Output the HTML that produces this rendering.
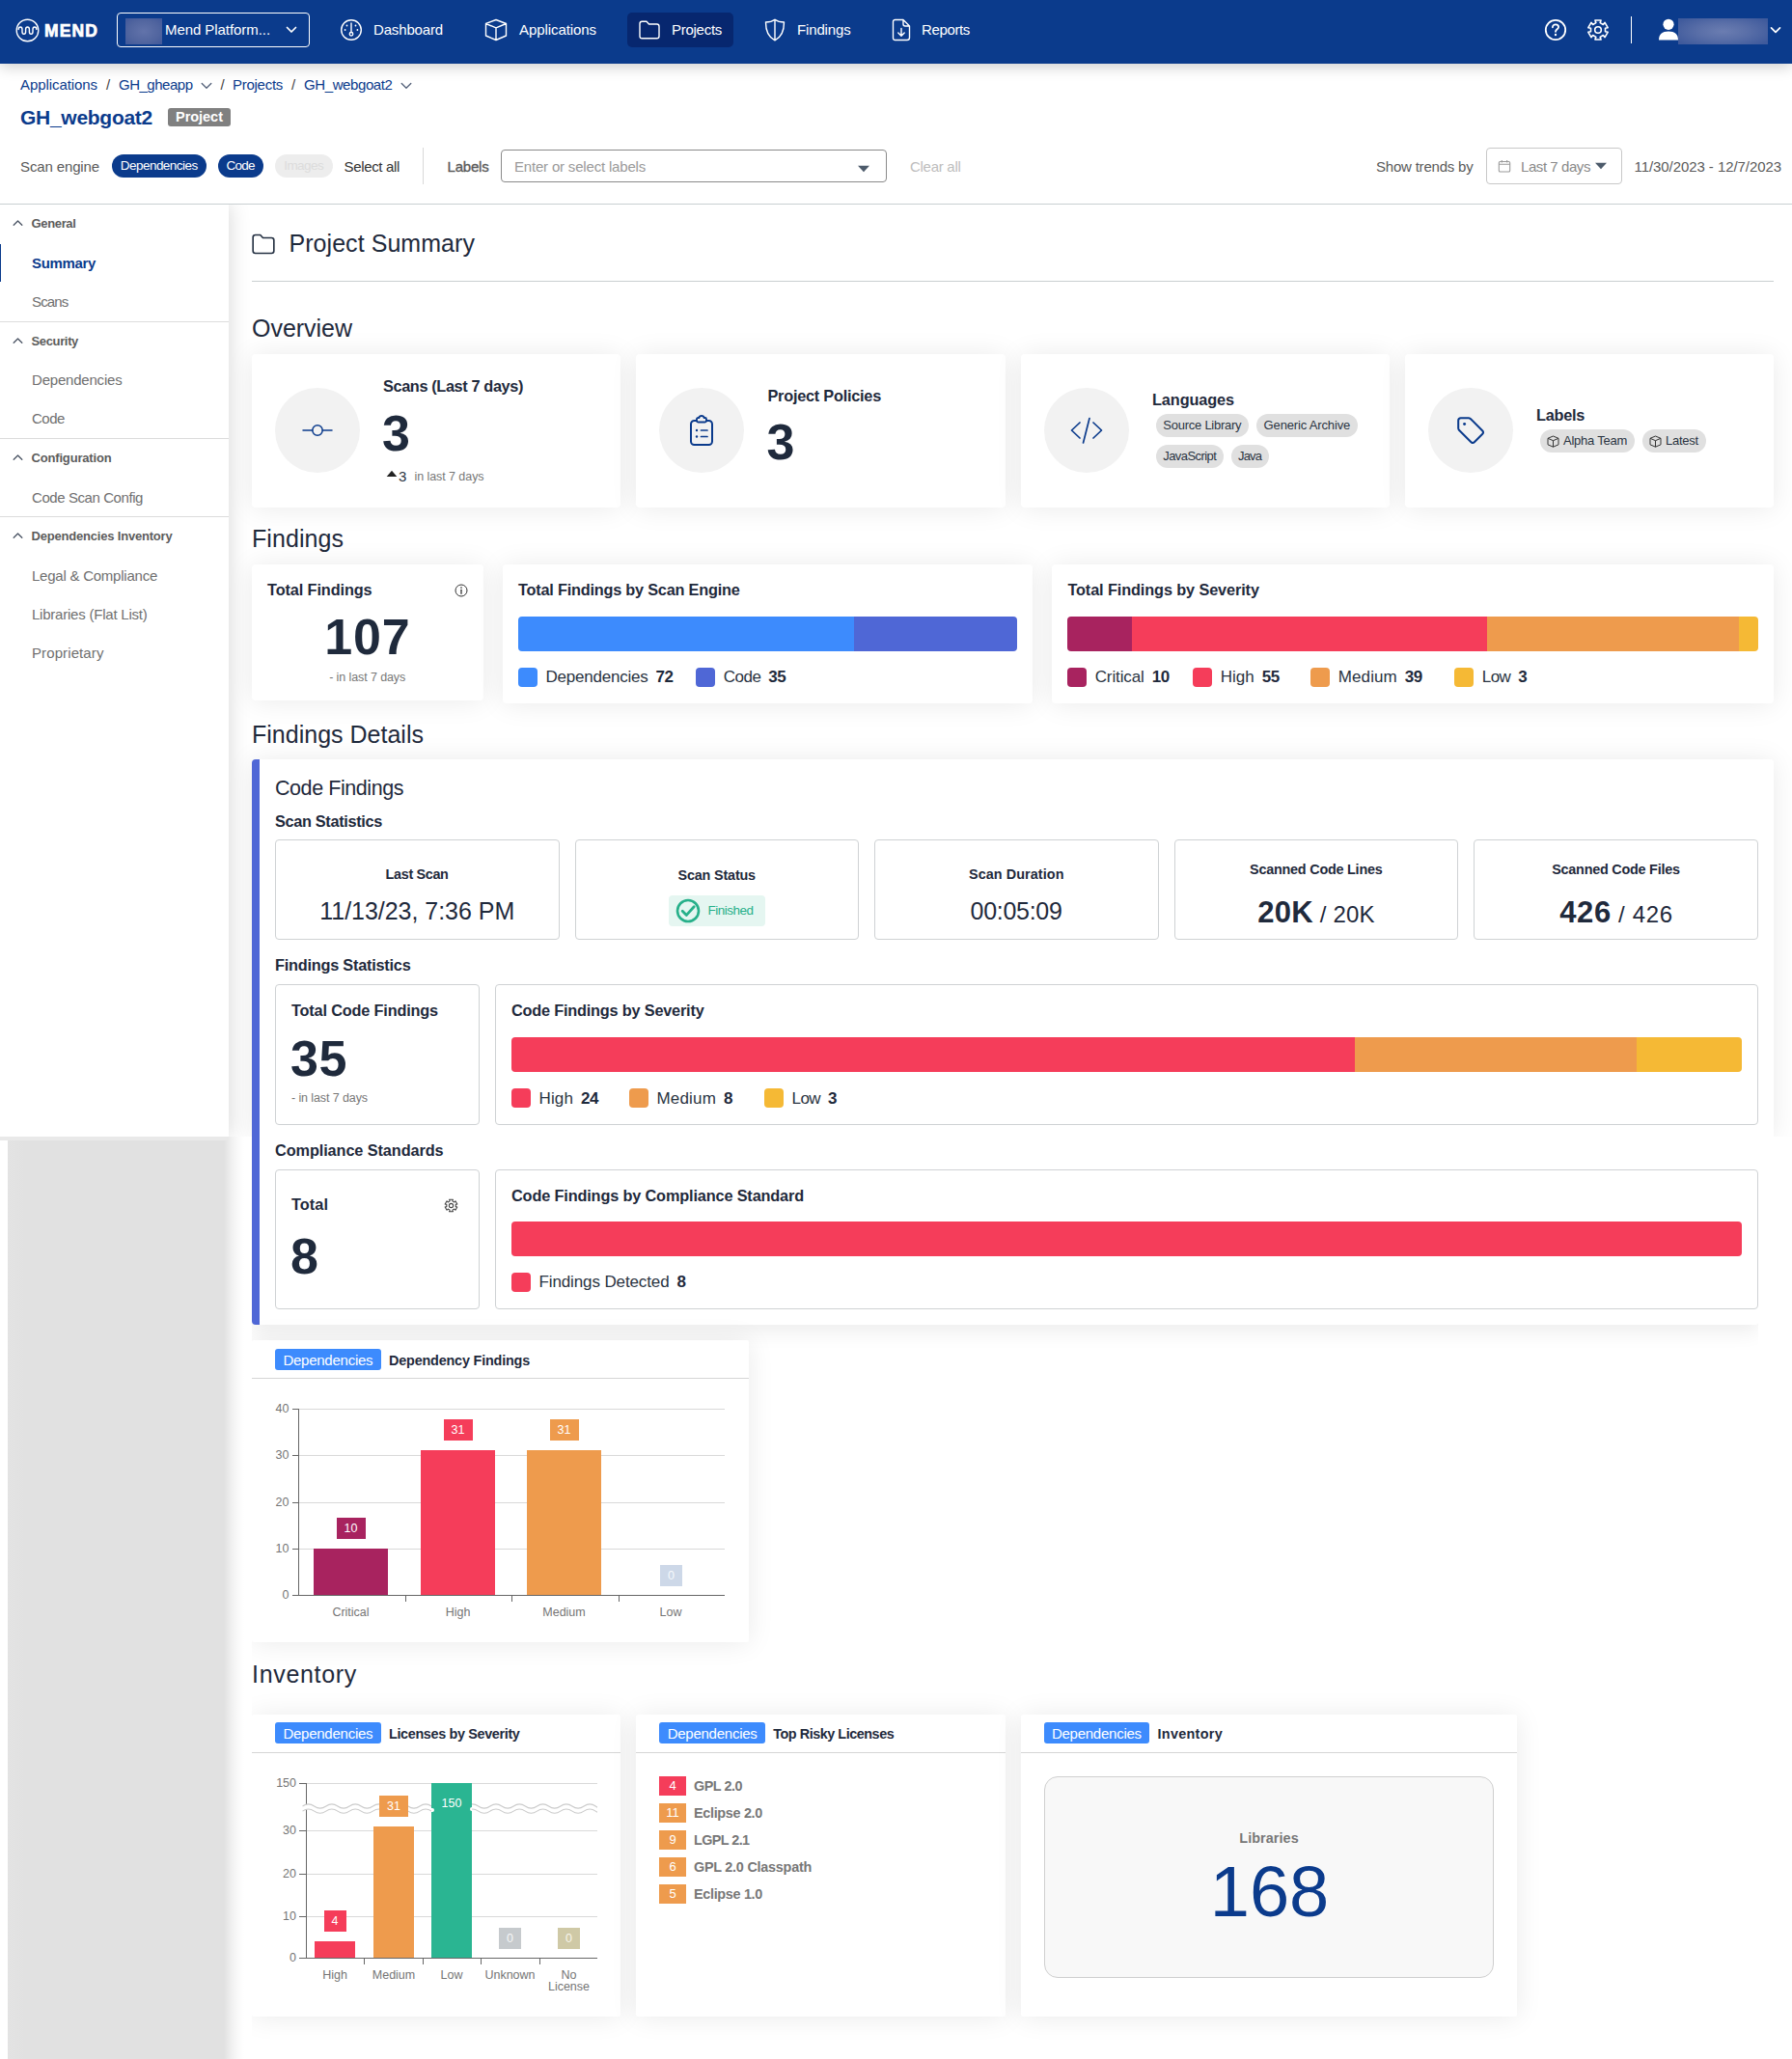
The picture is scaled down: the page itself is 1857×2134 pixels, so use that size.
<!DOCTYPE html>
<html><head><meta charset="utf-8"><title>Project Summary</title>
<style>
html,body{margin:0;padding:0;}
body{width:1857px;height:2134px;position:relative;overflow:hidden;background:#fff;font-family:"Liberation Sans",sans-serif;}
.a{position:absolute;}
.t{white-space:pre;line-height:1;}
b{font-weight:700;}
</style></head><body>
<div class="a" style="left:0px;top:212px;width:237.2px;height:966px;background:#fff;box-shadow:2px 0 20px rgba(0,0,0,0.14);clip-path:inset(0 -30px 0 0);"></div>
<div class="a" style="left:8px;top:1178px;width:252px;height:956px;background:linear-gradient(90deg,#e3e3e3 0,#e1e1e1 18px,#e1e1e1 224px,#f2f2f2 233px,#fbfbfb 240px,#fff 245px);"></div>
<div class="a" style="left:0px;top:1178px;width:237px;height:3.5px;background:#e9e9e9;"></div>
<div class="a" style="left:0px;top:0px;width:1857px;height:66px;background:#0b3b8c;box-shadow:0 3px 14px rgba(0,0,0,0.2);"></div>
<svg class="a" style="left:16px;top:19px;" width="25" height="25" viewBox="0 0 25 25"><circle cx="12.5" cy="12.5" r="11.3" fill="none" stroke="#fff" stroke-width="1.4"/><path d="M3.2 11.5 C3.2 8.2 7 8.2 7 11.5 V14 C7 17 10.6 17 10.6 14 V11.3 C10.6 8.2 14.4 8.2 14.4 11.3 V14 C14.4 17 18 17 18 14 V11.5 C18 8.2 21.8 8.2 21.8 11.5" fill="none" stroke="#fff" stroke-width="1.4" stroke-linecap="round"/></svg>
<div class="a t" style="left:46.00px;top:23.63px;font-size:17.5px;font-weight:700;color:#fff;letter-spacing:1.117px;-webkit-text-stroke:0.7px #fff;">MEND</div>
<div class="a" style="left:121px;top:13px;width:200px;height:36px;background:transparent;border-radius:4px;border:1.5px solid #fff;box-sizing:border-box;"></div>
<div class="a" style="left:130px;top:19px;width:38px;height:27px;background:radial-gradient(ellipse at center,#6273aa 0,#51659f 60%,#41589a 100%);"></div>
<div class="a t" style="left:171.00px;top:22.85px;font-size:15px;font-weight:400;color:#fff;letter-spacing:-0.065px;">Mend Platform...</div>
<svg class="a" style="left:296px;top:26px;" width="12" height="10" viewBox="0 0 12 10"><path d="M1.5 2.5 L6 7 L10.5 2.5" fill="none" stroke="#fff" stroke-width="1.7" stroke-linecap="round" stroke-linejoin="round"/></svg>
<svg class="a" style="left:352px;top:19px;" width="24" height="24" viewBox="0 0 24 24"><circle cx="12" cy="12" r="10.3" fill="none" stroke="#fff" stroke-width="1.4"/><path d="M12 5 V14.5" stroke="#fff" stroke-width="1.4" stroke-linecap="round"/><circle cx="12" cy="16.3" r="1.8" fill="none" stroke="#fff" stroke-width="1.3"/><circle cx="5.6" cy="12" r="0.9" fill="#fff"/><circle cx="18.4" cy="12" r="0.9" fill="#fff"/><circle cx="7.5" cy="7.5" r="0.9" fill="#fff"/><circle cx="16.5" cy="7.5" r="0.9" fill="#fff"/></svg>
<div class="a t" style="left:387.00px;top:22.85px;font-size:15px;font-weight:400;color:#fff;letter-spacing:-0.155px;">Dashboard</div>
<svg class="a" style="left:501px;top:18px;" width="26" height="26" viewBox="0 0 26 26"><path d="M13 2.5 L23.5 6.5 V19 L13 23.5 L2.5 19 V6.5 Z M2.5 6.5 L13 10.8 L23.5 6.5 M13 10.8 V23.5" fill="none" stroke="#fff" stroke-width="1.4" stroke-linejoin="round"/></svg>
<div class="a t" style="left:538.00px;top:22.85px;font-size:15px;font-weight:400;color:#fff;letter-spacing:-0.074px;">Applications</div>
<div class="a" style="left:650px;top:13px;width:110px;height:36px;background:#07276f;border-radius:5px;"></div>
<svg class="a" style="left:661px;top:19px;" width="24" height="24" viewBox="0 0 24 24"><path d="M2 5.5 C2 4.2 3 3.2 4.3 3.2 H9 L11.5 6 H19.7 C21 6 22 7 22 8.3 V18.5 C22 19.8 21 20.8 19.7 20.8 H4.3 C3 20.8 2 19.8 2 18.5 Z" fill="none" stroke="#fff" stroke-width="1.4" stroke-linejoin="round"/></svg>
<div class="a t" style="left:696.00px;top:22.85px;font-size:15px;font-weight:400;color:#fff;letter-spacing:-0.273px;">Projects</div>
<svg class="a" style="left:791px;top:18px;" width="24" height="26" viewBox="0 0 24 26"><path d="M12 2.2 C9 4.5 5.5 5 2.5 5 C2.5 14 5 20.5 12 23.8 C19 20.5 21.5 14 21.5 5 C18.5 5 15 4.5 12 2.2 Z M12 2.2 V23.8" fill="none" stroke="#fff" stroke-width="1.4" stroke-linejoin="round"/></svg>
<div class="a t" style="left:826.00px;top:22.85px;font-size:15px;font-weight:400;color:#fff;letter-spacing:-0.150px;">Findings</div>
<svg class="a" style="left:924px;top:19px;" width="20" height="24" viewBox="0 0 20 24"><path d="M3.5 1.5 H12 L18.5 8 V20 C18.5 21.4 17.4 22.5 16 22.5 H3.5 C2.4 22.5 1.5 21.6 1.5 20.5 V3.5 C1.5 2.4 2.4 1.5 3.5 1.5 Z M12 1.5 V6 C12 7.1 12.9 8 14 8 H18.5" fill="none" stroke="#fff" stroke-width="1.4" stroke-linejoin="round"/><path d="M10 10.5 V18 M6.8 15 L10 18.2 L13.2 15" fill="none" stroke="#fff" stroke-width="1.4" stroke-linecap="round" stroke-linejoin="round"/></svg>
<div class="a t" style="left:955.00px;top:22.85px;font-size:15px;font-weight:400;color:#fff;letter-spacing:-0.362px;">Reports</div>
<svg class="a" style="left:1600px;top:19px;" width="24" height="24" viewBox="0 0 24 24"><circle cx="12" cy="12" r="10.2" fill="none" stroke="#fff" stroke-width="1.8"/><path d="M8.9 9.3 C8.9 7.4 10.3 6.4 12 6.4 C13.8 6.4 15.1 7.5 15.1 9.1 C15.1 11.3 12 11.4 12 13.8" fill="none" stroke="#fff" stroke-width="1.8" stroke-linecap="round"/><circle cx="12" cy="17" r="1.2" fill="#fff"/></svg>
<svg class="a" style="left:1644px;top:19px;" width="24" height="24" viewBox="0 0 24 24"><path d="M8.93 2.06 L15.07 2.06 L14.15 4.61 L17.32 6.44 L19.07 4.37 L22.14 9.69 L19.48 10.17 L19.48 13.83 L22.14 14.31 L19.07 19.63 L17.32 17.56 L14.15 19.39 L15.07 21.94 L8.93 21.94 L9.85 19.39 L6.68 17.56 L4.93 19.63 L1.86 14.31 L4.52 13.83 L4.52 10.17 L1.86 9.69 L4.93 4.37 L6.68 6.44 L9.85 4.61 Z" fill="none" stroke="#fff" stroke-width="1.6" stroke-linejoin="round"/><circle cx="12" cy="12" r="3.3" fill="none" stroke="#fff" stroke-width="1.6"/></svg>
<div class="a" style="left:1689.5px;top:17px;width:1.7000000000000455px;height:28px;background:#fff;"></div>
<svg class="a" style="left:1718px;top:19px;" width="22" height="23" viewBox="0 0 22 23"><circle cx="11" cy="6.3" r="5.6" fill="#fff"/><path d="M1 22.5 C1 16.5 4.5 13.5 11 13.5 C17.5 13.5 21 16.5 21 22.5 Z" fill="#fff"/></svg>
<div class="a" style="left:1739px;top:19px;width:93px;height:27px;background:radial-gradient(ellipse 60% 70% at center,#6b7db1 0,#5a6fa8 45%,#3f5a9c 100%);"></div>
<svg class="a" style="left:1834px;top:27px;" width="12" height="9" viewBox="0 0 12 9"><path d="M1.5 1.8 L6 6.3 L10.5 1.8" fill="none" stroke="#fff" stroke-width="1.7" stroke-linecap="round" stroke-linejoin="round"/></svg>
<div class="a t" style="left:21.00px;top:79.85px;font-size:15px;font-weight:400;color:#0b3b8c;letter-spacing:-0.074px;">Applications</div>
<div class="a t" style="left:110.00px;top:79.85px;font-size:15px;font-weight:400;color:#444;">/</div>
<div class="a t" style="left:123.00px;top:79.85px;font-size:15px;font-weight:400;color:#0b3b8c;letter-spacing:-0.490px;">GH_gheapp</div>
<svg class="a" style="left:208px;top:84.5px;" width="12" height="8" viewBox="0 0 12 8"><path d="M1.2 1.5 L6 6.3 L10.8 1.5" fill="none" stroke="#55627a" stroke-width="1.3" stroke-linecap="round" stroke-linejoin="round"/></svg>
<div class="a t" style="left:228.50px;top:79.85px;font-size:15px;font-weight:400;color:#444;">/</div>
<div class="a t" style="left:241.00px;top:79.85px;font-size:15px;font-weight:400;color:#0b3b8c;letter-spacing:-0.273px;">Projects</div>
<div class="a t" style="left:302.00px;top:79.85px;font-size:15px;font-weight:400;color:#444;">/</div>
<div class="a t" style="left:315.00px;top:79.85px;font-size:15px;font-weight:400;color:#0b3b8c;letter-spacing:-0.401px;">GH_webgoat2</div>
<svg class="a" style="left:415px;top:84.5px;" width="12" height="8" viewBox="0 0 12 8"><path d="M1.2 1.5 L6 6.3 L10.8 1.5" fill="none" stroke="#55627a" stroke-width="1.3" stroke-linecap="round" stroke-linejoin="round"/></svg>
<div class="a t" style="left:21.00px;top:110.71px;font-size:21px;font-weight:700;color:#0b3b8c;letter-spacing:-0.276px;">GH_webgoat2</div>
<div class="a" style="left:174px;top:112px;width:65px;height:19px;background:#808080;border-radius:3px;"></div>
<div class="a t" style="left:181.99px;top:114.39px;font-size:14.5px;font-weight:700;color:#fff;letter-spacing:-0.025px;">Project</div>
<div class="a t" style="left:21.00px;top:165.15px;font-size:15px;font-weight:400;color:#5a5a5a;letter-spacing:-0.128px;">Scan engine</div>
<div class="a" style="left:116px;top:160px;width:98px;height:24px;background:#0b3b8c;border-radius:12px;"></div>
<div class="a t" style="left:124.74px;top:164.88px;font-size:13.5px;font-weight:400;color:#fff;letter-spacing:-0.527px;">Dependencies</div>
<div class="a" style="left:226px;top:160px;width:47px;height:24px;background:#0b3b8c;border-radius:12px;"></div>
<div class="a t" style="left:234.59px;top:164.88px;font-size:13.5px;font-weight:400;color:#fff;letter-spacing:-0.820px;">Code</div>
<div class="a" style="left:285px;top:160px;width:60px;height:24px;background:#ededed;border-radius:12px;"></div>
<div class="a t" style="left:294.23px;top:164.88px;font-size:13.5px;font-weight:400;color:#dcdcdc;letter-spacing:-0.547px;">Images</div>
<div class="a t" style="left:356.50px;top:165.15px;font-size:15px;font-weight:400;color:#333;letter-spacing:-0.338px;">Select all</div>
<div class="a" style="left:438px;top:153px;width:1px;height:38px;background:#d9d9d9;"></div>
<div class="a t" style="left:463.50px;top:165.15px;font-size:15px;font-weight:400;color:#5a5a5a;letter-spacing:-0.201px;-webkit-text-stroke:0.35px #5a5a5a;">Labels</div>
<div class="a" style="left:519px;top:155px;width:400px;height:34px;background:#fff;border-radius:4px;border:1px solid #8a8a8a;box-sizing:border-box;"></div>
<div class="a t" style="left:533.00px;top:165.15px;font-size:15px;font-weight:400;color:#9a9a9a;letter-spacing:-0.185px;">Enter or select labels</div>
<svg class="a" style="left:888px;top:171px;" width="14" height="8" viewBox="0 0 14 8"><path d="M1 0.8 H13 L7 7.2 Z" fill="#4d5b6b"/></svg>
<div class="a t" style="left:943.00px;top:165.15px;font-size:15px;font-weight:400;color:#bdbdbd;letter-spacing:-0.281px;">Clear all</div>
<div class="a t" style="left:1426.00px;top:165.15px;font-size:15px;font-weight:400;color:#5a5a5a;letter-spacing:-0.206px;">Show trends by</div>
<div class="a" style="left:1539.5px;top:153px;width:141.0px;height:37.5px;background:#fff;border-radius:4px;border:1px solid #c8c8c8;box-sizing:border-box;"></div>
<svg class="a" style="left:1551.5px;top:165px;" width="14" height="14" viewBox="0 0 14 14"><rect x="1.3" y="2.5" width="11.4" height="10.5" rx="1.3" fill="none" stroke="#9a9a9a" stroke-width="1.1"/><path d="M1.3 5.3 H12.7 M4.3 1 V3.5 M9.7 1 V3.5" stroke="#9a9a9a" stroke-width="1.1"/></svg>
<div class="a t" style="left:1576.00px;top:164.65px;font-size:15px;font-weight:400;color:#8a8a8a;letter-spacing:-0.429px;">Last 7 days</div>
<svg class="a" style="left:1652px;top:168px;" width="14" height="8" viewBox="0 0 14 8"><path d="M1 0.8 H13 L7 7.2 Z" fill="#4d5b6b"/></svg>
<div class="a t" style="left:1693.50px;top:165.15px;font-size:15px;font-weight:400;color:#5a5a5a;letter-spacing:-0.070px;">11/30/2023 - 12/7/2023</div>
<div class="a" style="left:0px;top:210.9px;width:1857px;height:1.0999999999999943px;background:#c9cfd1;"></div>
<svg class="a" style="left:13.0px;top:227.0px;" width="11" height="8" viewBox="0 0 11 8"><path d="M1.2 6.3 L5.5 2 L9.8 6.3" fill="none" stroke="#4a5464" stroke-width="1.3" stroke-linecap="round" stroke-linejoin="round"/></svg>
<div class="a t" style="left:32.50px;top:225.13px;font-size:13px;font-weight:700;color:#5c5c5c;letter-spacing:-0.346px;">General</div>
<div class="a" style="left:0px;top:253px;width:1.3px;height:39px;background:#0b3b8c;"></div>
<div class="a t" style="left:33.00px;top:265.15px;font-size:15px;font-weight:700;color:#0b3b8c;letter-spacing:-0.339px;">Summary</div>
<div class="a t" style="left:33.00px;top:305.15px;font-size:15px;font-weight:400;color:#707070;letter-spacing:-0.841px;">Scans</div>
<div class="a" style="left:0px;top:333px;width:237px;height:1px;background:#dcdcdc;"></div>
<svg class="a" style="left:13.0px;top:349.0px;" width="11" height="8" viewBox="0 0 11 8"><path d="M1.2 6.3 L5.5 2 L9.8 6.3" fill="none" stroke="#4a5464" stroke-width="1.3" stroke-linecap="round" stroke-linejoin="round"/></svg>
<div class="a t" style="left:32.50px;top:347.13px;font-size:13px;font-weight:700;color:#5c5c5c;letter-spacing:-0.352px;">Security</div>
<div class="a t" style="left:33.00px;top:386.15px;font-size:15px;font-weight:400;color:#707070;letter-spacing:-0.201px;">Dependencies</div>
<div class="a t" style="left:33.00px;top:426.15px;font-size:15px;font-weight:400;color:#707070;letter-spacing:-0.465px;">Code</div>
<div class="a" style="left:0px;top:454px;width:237px;height:1px;background:#dcdcdc;"></div>
<svg class="a" style="left:13.0px;top:470.0px;" width="11" height="8" viewBox="0 0 11 8"><path d="M1.2 6.3 L5.5 2 L9.8 6.3" fill="none" stroke="#4a5464" stroke-width="1.3" stroke-linecap="round" stroke-linejoin="round"/></svg>
<div class="a t" style="left:32.50px;top:468.13px;font-size:13px;font-weight:700;color:#5c5c5c;letter-spacing:-0.171px;">Configuration</div>
<div class="a t" style="left:33.00px;top:508.15px;font-size:15px;font-weight:400;color:#707070;letter-spacing:-0.422px;">Code Scan Config</div>
<div class="a" style="left:0px;top:535px;width:237px;height:1px;background:#dcdcdc;"></div>
<svg class="a" style="left:13.0px;top:551.0px;" width="11" height="8" viewBox="0 0 11 8"><path d="M1.2 6.3 L5.5 2 L9.8 6.3" fill="none" stroke="#4a5464" stroke-width="1.3" stroke-linecap="round" stroke-linejoin="round"/></svg>
<div class="a t" style="left:32.50px;top:549.13px;font-size:13px;font-weight:700;color:#5c5c5c;letter-spacing:-0.195px;">Dependencies Inventory</div>
<div class="a t" style="left:33.00px;top:589.15px;font-size:15px;font-weight:400;color:#707070;letter-spacing:-0.236px;">Legal & Compliance</div>
<div class="a t" style="left:33.00px;top:629.15px;font-size:15px;font-weight:400;color:#707070;letter-spacing:-0.224px;">Libraries (Flat List)</div>
<div class="a t" style="left:33.00px;top:669.15px;font-size:15px;font-weight:400;color:#707070;letter-spacing:0.104px;">Proprietary</div>
<svg class="a" style="left:260px;top:239.5px;" width="26" height="26" viewBox="0 0 24 24"><path d="M2 5.5 C2 4.2 3 3.2 4.3 3.2 H9 L11.5 6 H19.7 C21 6 22 7 22 8.3 V18.5 C22 19.8 21 20.8 19.7 20.8 H4.3 C3 20.8 2 19.8 2 18.5 Z" fill="none" stroke="#243042" stroke-width="1.5" stroke-linejoin="round"/></svg>
<div class="a t" style="left:299.50px;top:240.05px;font-size:25px;font-weight:400;color:#1f2a3c;letter-spacing:0.052px;">Project Summary</div>
<div class="a" style="left:261px;top:291px;width:1577px;height:1.1000000000000227px;background:#c9cfd1;"></div>
<div class="a t" style="left:261.00px;top:328.25px;font-size:25px;font-weight:400;color:#1f2a3c;letter-spacing:-0.023px;">Overview</div>
<div class="a" style="left:261px;top:367px;width:382.25px;height:159px;background:#fff;border-radius:4px;box-shadow:0 1px 28px rgba(0,0,0,0.085);"></div>
<div class="a" style="left:285px;top:402px;width:88px;height:88px;background:#f2f2f2;border-radius:44px;"></div>
<div class="a" style="left:659.25px;top:367px;width:382.25px;height:159px;background:#fff;border-radius:4px;box-shadow:0 1px 28px rgba(0,0,0,0.085);"></div>
<div class="a" style="left:683.25px;top:402px;width:88.0px;height:88px;background:#f2f2f2;border-radius:44px;"></div>
<div class="a" style="left:1057.5px;top:367px;width:382.25px;height:159px;background:#fff;border-radius:4px;box-shadow:0 1px 28px rgba(0,0,0,0.085);"></div>
<div class="a" style="left:1081.5px;top:402px;width:88.0px;height:88px;background:#f2f2f2;border-radius:44px;"></div>
<div class="a" style="left:1455.75px;top:367px;width:382.25px;height:159px;background:#fff;border-radius:4px;box-shadow:0 1px 28px rgba(0,0,0,0.085);"></div>
<div class="a" style="left:1479.75px;top:402px;width:88.0px;height:88px;background:#f2f2f2;border-radius:44px;"></div>
<svg class="a" style="left:313px;top:436px;" width="32" height="20" viewBox="0 0 32 20"><circle cx="16" cy="10" r="5.2" fill="none" stroke="#0b3b8c" stroke-width="1.5"/><path d="M1 10 H10.8 M21.2 10 H31" stroke="#0b3b8c" stroke-width="1.5" stroke-linecap="round"/></svg>
<div class="a t" style="left:397.00px;top:392.41px;font-size:16.3px;font-weight:700;color:#1f2a3c;letter-spacing:-0.370px;">Scans (Last 7 days)</div>
<div class="a t" style="left:396.00px;top:422.92px;font-size:52px;font-weight:700;color:#1f2a3c;">3</div>
<svg class="a" style="left:400px;top:487px;" width="12" height="8" viewBox="0 0 12 8"><path d="M6 0.8 L11.3 7 H0.7 Z" fill="#222"/></svg>
<div class="a t" style="left:413.00px;top:486.15px;font-size:15px;font-weight:400;color:#2a3442;">3</div>
<div class="a t" style="left:429.50px;top:487.68px;font-size:12.5px;font-weight:400;color:#777;letter-spacing:-0.069px;">in last 7 days</div>
<svg class="a" style="left:712.8px;top:430px;" width="28" height="34" viewBox="0 0 28 34"><rect x="3" y="6" width="22" height="25" rx="3.5" fill="none" stroke="#0b3b8c" stroke-width="2"/><path d="M9 6 V4.5 C9 3.7 9.7 3 10.5 3 H11.3 C11.6 1.8 12.7 1 14 1 C15.3 1 16.4 1.8 16.7 3 H17.5 C18.3 3 19 3.7 19 4.5 V6 C19 6.8 18.3 7.5 17.5 7.5 H10.5 C9.7 7.5 9 6.8 9 6 Z" fill="#f2f2f2" stroke="#0b3b8c" stroke-width="1.9"/><path d="M13.5 16 H20 M13.5 22.5 H20" stroke="#0b3b8c" stroke-width="1.7" stroke-linecap="round"/><circle cx="9" cy="16" r="1.2" fill="#0b3b8c"/><circle cx="9" cy="22.5" r="1.2" fill="#0b3b8c"/></svg>
<div class="a t" style="left:795.50px;top:402.01px;font-size:16.3px;font-weight:700;color:#1f2a3c;letter-spacing:-0.235px;">Project Policies</div>
<div class="a t" style="left:794.50px;top:431.92px;font-size:52px;font-weight:700;color:#1f2a3c;">3</div>
<svg class="a" style="left:1108px;top:430px;" width="36" height="32" viewBox="0 0 36 32"><path d="M11 8 L2.5 16 L11 24 M25 8 L33.5 16 L25 24 M21 3.5 L14.5 29" fill="none" stroke="#0b3b8c" stroke-width="1.7" stroke-linecap="round" stroke-linejoin="round"/></svg>
<div class="a t" style="left:1194.00px;top:406.01px;font-size:16.3px;font-weight:700;color:#1f2a3c;letter-spacing:-0.106px;">Languages</div>
<div class="a" style="left:1198px;top:429px;width:96px;height:24px;background:#e0e0e0;border-radius:12.0px;"></div>
<div class="a t" style="left:1205.37px;top:434.33px;font-size:13px;font-weight:400;color:#2a3442;letter-spacing:-0.253px;">Source Library</div>
<div class="a" style="left:1302.2px;top:429px;width:104.5px;height:24px;background:#e0e0e0;border-radius:12.0px;"></div>
<div class="a t" style="left:1309.62px;top:434.33px;font-size:13px;font-weight:400;color:#2a3442;letter-spacing:-0.151px;">Generic Archive</div>
<div class="a" style="left:1198px;top:461px;width:70px;height:24px;background:#e0e0e0;border-radius:12.0px;"></div>
<div class="a t" style="left:1205.21px;top:466.33px;font-size:13px;font-weight:400;color:#2a3442;letter-spacing:-0.570px;">JavaScript</div>
<div class="a" style="left:1276px;top:461px;width:39px;height:24px;background:#e0e0e0;border-radius:12.0px;"></div>
<div class="a t" style="left:1283.07px;top:466.33px;font-size:13px;font-weight:400;color:#2a3442;letter-spacing:-0.867px;">Java</div>
<svg class="a" style="left:1507.8px;top:430px;" width="32" height="32" viewBox="0 0 30 30"><path d="M3 5.5 C3 4.1 4.1 3 5.5 3 H13 C13.7 3 14.3 3.3 14.8 3.7 L26.3 15.2 C27.3 16.2 27.3 17.8 26.3 18.8 L18.8 26.3 C17.8 27.3 16.2 27.3 15.2 26.3 L3.7 14.8 C3.3 14.3 3 13.7 3 13 Z" fill="none" stroke="#0b3b8c" stroke-width="1.9" stroke-linejoin="round"/><circle cx="9" cy="9" r="1.4" fill="#0b3b8c"/></svg>
<div class="a t" style="left:1592.00px;top:422.01px;font-size:16.3px;font-weight:700;color:#1f2a3c;letter-spacing:-0.266px;">Labels</div>
<div class="a" style="left:1596px;top:445px;width:98px;height:24px;background:#e0e0e0;border-radius:12.0px;"></div>
<svg class="a" style="left:1603px;top:450.5px;" width="13" height="13" viewBox="0 0 13 13"><path d="M6.5 1 L12 3.3 V9.8 L6.5 12.2 L1 9.8 V3.3 Z M1 3.3 L6.5 5.7 L12 3.3 M6.5 5.7 V12.2" fill="none" stroke="#333" stroke-width="1" stroke-linejoin="round"/></svg>
<div class="a t" style="left:1620.00px;top:450.33px;font-size:13px;font-weight:400;color:#2a3442;letter-spacing:-0.242px;">Alpha Team</div>
<div class="a" style="left:1702px;top:445px;width:66px;height:24px;background:#e0e0e0;border-radius:12.0px;"></div>
<svg class="a" style="left:1709px;top:450.5px;" width="13" height="13" viewBox="0 0 13 13"><path d="M6.5 1 L12 3.3 V9.8 L6.5 12.2 L1 9.8 V3.3 Z M1 3.3 L6.5 5.7 L12 3.3 M6.5 5.7 V12.2" fill="none" stroke="#333" stroke-width="1" stroke-linejoin="round"/></svg>
<div class="a t" style="left:1726.00px;top:450.33px;font-size:13px;font-weight:400;color:#2a3442;letter-spacing:-0.237px;">Latest</div>
<div class="a t" style="left:261.00px;top:546.25px;font-size:25px;font-weight:400;color:#1f2a3c;letter-spacing:0.062px;">Findings</div>
<div class="a" style="left:261px;top:585px;width:239.8px;height:141px;background:#fff;border-radius:4px;box-shadow:0 1px 28px rgba(0,0,0,0.085);"></div>
<div class="a" style="left:521px;top:585px;width:548.7px;height:144px;background:#fff;border-radius:4px;box-shadow:0 1px 28px rgba(0,0,0,0.085);"></div>
<div class="a" style="left:1090.4px;top:585px;width:747.5999999999999px;height:144px;background:#fff;border-radius:4px;box-shadow:0 1px 28px rgba(0,0,0,0.085);"></div>
<div class="a t" style="left:277.00px;top:602.81px;font-size:16.3px;font-weight:700;color:#1f2a3c;letter-spacing:-0.110px;">Total Findings</div>
<svg class="a" style="left:471px;top:604.8px;" width="14" height="14" viewBox="0 0 14 14"><circle cx="7" cy="7" r="6" fill="none" stroke="#333" stroke-width="1"/><path d="M7 6.3 V10.3" stroke="#333" stroke-width="1.3" stroke-linecap="round"/><circle cx="7" cy="4" r="0.85" fill="#333"/></svg>
<div class="a t" style="left:336.37px;top:634.02px;font-size:52px;font-weight:700;color:#1f2a3c;letter-spacing:0.745px;">107</div>
<div class="a t" style="left:341.15px;top:695.88px;font-size:12.5px;font-weight:400;color:#777;letter-spacing:-0.100px;">- in last 7 days</div>
<div class="a t" style="left:537.00px;top:602.61px;font-size:16.3px;font-weight:700;color:#1f2a3c;letter-spacing:-0.217px;">Total Findings by Scan Engine</div>
<div class="a" style="left:537px;top:639px;width:347.79999999999995px;height:36px;background:#3d8bfd;border-radius:4px 0px 0px 4px;"></div>
<div class="a" style="left:884.8px;top:639px;width:168.79999999999995px;height:36px;background:#4f67d6;border-radius:0px 4px 4px 0px;"></div>
<div class="a" style="left:537px;top:692px;width:20px;height:20px;background:#3d8bfd;border-radius:4px;"></div>
<div class="a t" style="left:565.50px;top:692.97px;font-size:17px;font-weight:400;color:#2a3442;letter-spacing:-0.225px;">Dependencies</div>
<div class="a t" style="left:679.50px;top:692.97px;font-size:17px;font-weight:700;color:#1f2a3c;letter-spacing:-0.461px;">72</div>
<div class="a" style="left:721.3px;top:692px;width:20.0px;height:20px;background:#4f67d6;border-radius:4px;"></div>
<div class="a t" style="left:749.80px;top:692.97px;font-size:17px;font-weight:400;color:#2a3442;letter-spacing:-0.535px;">Code</div>
<div class="a t" style="left:796.30px;top:692.97px;font-size:17px;font-weight:700;color:#1f2a3c;letter-spacing:-0.461px;">35</div>
<div class="a t" style="left:1106.40px;top:602.61px;font-size:16.3px;font-weight:700;color:#1f2a3c;letter-spacing:-0.114px;">Total Findings by Severity</div>
<div class="a" style="left:1106px;top:639px;width:66.90000000000009px;height:36px;background:#a8235f;border-radius:4px 0px 0px 4px;"></div>
<div class="a" style="left:1172.9px;top:639px;width:368.0999999999999px;height:36px;background:#f53d5a;border-radius:0px 0px 0px 0px;"></div>
<div class="a" style="left:1541px;top:639px;width:261.20000000000005px;height:36px;background:#ee9b4d;border-radius:0px 0px 0px 0px;"></div>
<div class="a" style="left:1802.2px;top:639px;width:19.59999999999991px;height:36px;background:#f5b935;border-radius:0px 4px 4px 0px;"></div>
<div class="a" style="left:1106.2px;top:692px;width:20.0px;height:20px;background:#a8235f;border-radius:4px;"></div>
<div class="a t" style="left:1134.70px;top:692.97px;font-size:17px;font-weight:400;color:#2a3442;letter-spacing:-0.119px;">Critical</div>
<div class="a t" style="left:1193.70px;top:692.97px;font-size:17px;font-weight:700;color:#1f2a3c;letter-spacing:-0.461px;">10</div>
<div class="a" style="left:1236.2px;top:692px;width:20.0px;height:20px;background:#f53d5a;border-radius:4px;"></div>
<div class="a t" style="left:1264.70px;top:692.97px;font-size:17px;font-weight:400;color:#2a3442;letter-spacing:0.008px;">High</div>
<div class="a t" style="left:1307.70px;top:692.97px;font-size:17px;font-weight:700;color:#1f2a3c;letter-spacing:-0.461px;">55</div>
<div class="a" style="left:1358.3px;top:692px;width:20.0px;height:20px;background:#ee9b4d;border-radius:4px;"></div>
<div class="a t" style="left:1386.80px;top:692.97px;font-size:17px;font-weight:400;color:#2a3442;letter-spacing:0.089px;">Medium</div>
<div class="a t" style="left:1455.80px;top:692.97px;font-size:17px;font-weight:700;color:#1f2a3c;letter-spacing:-0.461px;">39</div>
<div class="a" style="left:1507.3px;top:692px;width:20.0px;height:20px;background:#f5b935;border-radius:4px;"></div>
<div class="a t" style="left:1535.80px;top:692.97px;font-size:17px;font-weight:400;color:#2a3442;letter-spacing:-0.562px;">Low</div>
<div class="a t" style="left:1573.30px;top:692.97px;font-size:17px;font-weight:700;color:#1f2a3c;letter-spacing:-0.469px;">3</div>
<div class="a t" style="left:261.00px;top:749.25px;font-size:25px;font-weight:400;color:#1f2a3c;letter-spacing:0.009px;">Findings Details</div>
<div class="a" style="left:261px;top:787px;width:1577px;height:391px;background:#fff;box-shadow:0 1px 28px rgba(0,0,0,0.085);border-radius:4px 3px 0 0;clip-path:inset(-40px -40px 0 -40px);"></div>
<div class="a" style="left:261px;top:1178px;width:1561px;height:195px;background:#fff;box-shadow:0 8px 20px rgba(0,0,0,0.07);border-radius:0 0 3px 4px;clip-path:inset(0 0 -40px 0);"></div>
<div class="a" style="left:261px;top:787px;width:8px;height:586px;background:#4f67d6;border-radius:4px 0 0 4px;"></div>
<div class="a t" style="left:285.00px;top:807.47px;font-size:21.5px;font-weight:400;color:#1f2a3c;letter-spacing:-0.434px;">Code Findings</div>
<div class="a t" style="left:285.00px;top:843.01px;font-size:16.3px;font-weight:700;color:#1f2a3c;letter-spacing:-0.323px;">Scan Statistics</div>
<div class="a" style="left:285px;top:870px;width:294.5px;height:103.60000000000002px;background:#fff;border-radius:4px;border:1px solid #cfd2d4;box-sizing:border-box;"></div>
<div class="a" style="left:595.8px;top:870px;width:294.0px;height:103.60000000000002px;background:#fff;border-radius:4px;border:1px solid #cfd2d4;box-sizing:border-box;"></div>
<div class="a" style="left:906px;top:870px;width:294.5px;height:103.60000000000002px;background:#fff;border-radius:4px;border:1px solid #cfd2d4;box-sizing:border-box;"></div>
<div class="a" style="left:1216.8px;top:870px;width:294.20000000000005px;height:103.60000000000002px;background:#fff;border-radius:4px;border:1px solid #cfd2d4;box-sizing:border-box;"></div>
<div class="a" style="left:1527.2px;top:870px;width:294.79999999999995px;height:103.60000000000002px;background:#fff;border-radius:4px;border:1px solid #cfd2d4;box-sizing:border-box;"></div>
<div class="a t" style="left:399.58px;top:899.24px;font-size:14.4px;font-weight:700;color:#1f2a3c;letter-spacing:-0.332px;">Last Scan</div>
<div class="a t" style="left:331.24px;top:932.25px;font-size:25px;font-weight:400;color:#1f2a3c;letter-spacing:-0.028px;">11/13/23, 7:36 PM</div>
<div class="a t" style="left:702.46px;top:900.14px;font-size:14.4px;font-weight:700;color:#1f2a3c;letter-spacing:-0.170px;">Scan Status</div>
<div class="a" style="left:693px;top:928px;width:99.5px;height:32px;background:#e5f6f1;border-radius:4px;"></div>
<svg class="a" style="left:699.5px;top:930.5px;" width="26" height="26" viewBox="0 0 26 26"><circle cx="13" cy="13" r="11" fill="none" stroke="#27b08a" stroke-width="2.6"/><path d="M7.2 13.2 L11.4 17.4 L19.2 8.8" fill="none" stroke="#27b08a" stroke-width="2.8" stroke-linecap="round" stroke-linejoin="round"/></svg>
<div class="a t" style="left:733.50px;top:936.88px;font-size:13.5px;font-weight:400;color:#27b08a;letter-spacing:-0.504px;">Finished</div>
<div class="a t" style="left:1004.04px;top:899.24px;font-size:14.4px;font-weight:700;color:#1f2a3c;letter-spacing:0.072px;">Scan Duration</div>
<div class="a t" style="left:1005.60px;top:932.25px;font-size:25px;font-weight:400;color:#1f2a3c;letter-spacing:-0.291px;">00:05:09</div>
<div class="a t" style="left:1295.04px;top:894.24px;font-size:14.4px;font-weight:700;color:#1f2a3c;letter-spacing:-0.225px;">Scanned Code Lines</div>
<div class="a t" style="left:1303.26px;top:934.24px;font-size:24px;font-weight:400;color:#1f2a3c;letter-spacing:0.212px;line-height:0;top:946px;"><b style="font-size:31px">20K</b> / 20K</div>
<div class="a t" style="left:1608.23px;top:894.24px;font-size:14.4px;font-weight:700;color:#1f2a3c;letter-spacing:-0.236px;">Scanned Code Files</div>
<div class="a t" style="left:1616.17px;top:934.24px;font-size:24px;font-weight:400;color:#1f2a3c;letter-spacing:0.635px;line-height:0;top:946px;"><b style="font-size:31px">426</b> / 426</div>
<div class="a t" style="left:285.00px;top:992.01px;font-size:16.3px;font-weight:700;color:#1f2a3c;letter-spacing:-0.224px;">Findings Statistics</div>
<div class="a" style="left:285px;top:1020px;width:212px;height:145.5px;background:#fff;border-radius:4px;border:1px solid #cfd2d4;box-sizing:border-box;"></div>
<div class="a" style="left:513px;top:1020px;width:1309px;height:145.5px;background:#fff;border-radius:4px;border:1px solid #cfd2d4;box-sizing:border-box;"></div>
<div class="a t" style="left:302.00px;top:1039.41px;font-size:16.3px;font-weight:700;color:#1f2a3c;letter-spacing:-0.172px;">Total Code Findings</div>
<div class="a t" style="left:301.00px;top:1071.02px;font-size:52px;font-weight:700;color:#1f2a3c;letter-spacing:0.578px;">35</div>
<div class="a t" style="left:302.00px;top:1132.38px;font-size:12.5px;font-weight:400;color:#777;letter-spacing:-0.100px;">- in last 7 days</div>
<div class="a t" style="left:530.00px;top:1038.61px;font-size:16.3px;font-weight:700;color:#1f2a3c;letter-spacing:-0.199px;">Code Findings by Severity</div>
<div class="a" style="left:530px;top:1075px;width:874px;height:36px;background:#f53d5a;border-radius:4px 0px 0px 4px;"></div>
<div class="a" style="left:1404px;top:1075px;width:291.70000000000005px;height:36px;background:#ee9b4d;border-radius:0px 0px 0px 0px;"></div>
<div class="a" style="left:1695.7px;top:1075px;width:109.09999999999991px;height:36px;background:#f5b935;border-radius:0px 4px 4px 0px;"></div>
<div class="a" style="left:530px;top:1127.5px;width:20px;height:20.0px;background:#f53d5a;border-radius:4px;"></div>
<div class="a t" style="left:558.50px;top:1129.57px;font-size:17px;font-weight:400;color:#2a3442;letter-spacing:0.133px;">High</div>
<div class="a t" style="left:602.00px;top:1129.57px;font-size:17px;font-weight:700;color:#1f2a3c;letter-spacing:-0.461px;">24</div>
<div class="a" style="left:652px;top:1127.5px;width:20px;height:20.0px;background:#ee9b4d;border-radius:4px;"></div>
<div class="a t" style="left:680.50px;top:1129.57px;font-size:17px;font-weight:400;color:#2a3442;letter-spacing:0.172px;">Medium</div>
<div class="a t" style="left:750.00px;top:1129.57px;font-size:17px;font-weight:700;color:#1f2a3c;letter-spacing:-0.469px;">8</div>
<div class="a" style="left:792px;top:1127.5px;width:20px;height:20.0px;background:#f5b935;border-radius:4px;"></div>
<div class="a t" style="left:820.50px;top:1129.57px;font-size:17px;font-weight:400;color:#2a3442;letter-spacing:-0.562px;">Low</div>
<div class="a t" style="left:858.00px;top:1129.57px;font-size:17px;font-weight:700;color:#1f2a3c;letter-spacing:-0.469px;">3</div>
<div class="a t" style="left:285.00px;top:1184.01px;font-size:16.3px;font-weight:700;color:#1f2a3c;letter-spacing:-0.097px;">Compliance Standards</div>
<div class="a" style="left:285px;top:1212px;width:212px;height:145px;background:#fff;border-radius:4px;border:1px solid #cfd2d4;box-sizing:border-box;"></div>
<div class="a" style="left:513px;top:1212px;width:1309px;height:145px;background:#fff;border-radius:4px;border:1px solid #cfd2d4;box-sizing:border-box;"></div>
<div class="a t" style="left:302.00px;top:1240.01px;font-size:16.3px;font-weight:700;color:#1f2a3c;letter-spacing:0.062px;">Total</div>
<svg class="a" style="left:460px;top:1241.5px;" width="15" height="15" viewBox="0 0 24 24"><path d="M8.93 2.06 L15.07 2.06 L14.15 4.61 L17.32 6.44 L19.07 4.37 L22.14 9.69 L19.48 10.17 L19.48 13.83 L22.14 14.31 L19.07 19.63 L17.32 17.56 L14.15 19.39 L15.07 21.94 L8.93 21.94 L9.85 19.39 L6.68 17.56 L4.93 19.63 L1.86 14.31 L4.52 13.83 L4.52 10.17 L1.86 9.69 L4.93 4.37 L6.68 6.44 L9.85 4.61 Z" fill="none" stroke="#444" stroke-width="1.7" stroke-linejoin="round"/><circle cx="12" cy="12" r="3.4" fill="none" stroke="#444" stroke-width="1.7"/></svg>
<div class="a t" style="left:301.00px;top:1276.02px;font-size:52px;font-weight:700;color:#1f2a3c;">8</div>
<div class="a t" style="left:530.00px;top:1230.51px;font-size:16.3px;font-weight:700;color:#1f2a3c;letter-spacing:-0.152px;">Code Findings by Compliance Standard</div>
<div class="a" style="left:530px;top:1266px;width:1274.8px;height:36px;background:#f53d5a;border-radius:4px 4px 4px 4px;"></div>
<div class="a" style="left:530px;top:1319px;width:20px;height:20px;background:#f53d5a;border-radius:4px;"></div>
<div class="a t" style="left:558.50px;top:1320.07px;font-size:17px;font-weight:400;color:#2a3442;letter-spacing:-0.119px;">Findings Detected</div>
<div class="a t" style="left:701.50px;top:1320.07px;font-size:17px;font-weight:700;color:#1f2a3c;letter-spacing:-0.469px;">8</div>
<div class="a" style="left:261px;top:1389px;width:515px;height:313px;background:#fff;border-radius:2px;box-shadow:0 1px 28px rgba(0,0,0,0.085);clip-path:inset(-40px -40px -40px 0);"></div>
<div class="a" style="left:285px;top:1398px;width:109.5px;height:22px;background:#3d8bfd;border-radius:3px;"></div>
<div class="a t" style="left:293.38px;top:1401.65px;font-size:15px;font-weight:400;color:#fff;letter-spacing:-0.242px;">Dependencies</div>
<div class="a t" style="left:403.00px;top:1402.94px;font-size:14.4px;font-weight:700;color:#1f2a3c;letter-spacing:-0.186px;">Dependency Findings</div>
<div class="a" style="left:261px;top:1428px;width:515px;height:1px;background:#d5d5d5;"></div>
<div class="a" style="left:309.5px;top:1459.5px;width:441.5px;height:1.0px;background:#d9d9d9;"></div>
<div class="a" style="left:302.5px;top:1459.5px;width:7.0px;height:1.0px;background:#666;"></div>
<div class="a t" style="left:285.59px;top:1454.38px;font-size:12.5px;font-weight:400;color:#757575;">40</div>
<div class="a" style="left:309.5px;top:1507.5px;width:441.5px;height:1.0px;background:#d9d9d9;"></div>
<div class="a" style="left:302.5px;top:1507.5px;width:7.0px;height:1.0px;background:#666;"></div>
<div class="a t" style="left:285.59px;top:1502.38px;font-size:12.5px;font-weight:400;color:#757575;">30</div>
<div class="a" style="left:309.5px;top:1556.5px;width:441.5px;height:1.0px;background:#d9d9d9;"></div>
<div class="a" style="left:302.5px;top:1556.5px;width:7.0px;height:1.0px;background:#666;"></div>
<div class="a t" style="left:285.59px;top:1551.38px;font-size:12.5px;font-weight:400;color:#757575;">20</div>
<div class="a" style="left:309.5px;top:1604.5px;width:441.5px;height:1.0px;background:#d9d9d9;"></div>
<div class="a" style="left:302.5px;top:1604.5px;width:7.0px;height:1.0px;background:#666;"></div>
<div class="a t" style="left:285.59px;top:1599.38px;font-size:12.5px;font-weight:400;color:#757575;">10</div>
<div class="a" style="left:302.5px;top:1652.5px;width:7.0px;height:1.0px;background:#666;"></div>
<div class="a t" style="left:292.55px;top:1647.38px;font-size:12.5px;font-weight:400;color:#757575;">0</div>
<div class="a" style="left:309.0px;top:1460px;width:1.0px;height:193px;background:#666;"></div>
<div class="a" style="left:309.0px;top:1652.5px;width:442.0px;height:1.0px;background:#666;"></div>
<div class="a" style="left:419.5px;top:1653px;width:1.0px;height:7px;background:#666;"></div>
<div class="a" style="left:530.0px;top:1653px;width:1.0px;height:7px;background:#666;"></div>
<div class="a" style="left:640.5px;top:1653px;width:1.0px;height:7px;background:#666;"></div>
<div class="a" style="left:325px;top:1605px;width:77px;height:47.5px;background:#a8235f;"></div>
<div class="a" style="left:436px;top:1503px;width:77px;height:149.5px;background:#f53d5a;"></div>
<div class="a" style="left:546px;top:1503px;width:77px;height:149.5px;background:#ee9b4d;"></div>
<div class="a" style="left:348.5px;top:1573px;width:30.0px;height:22px;background:#a8235f;"></div>
<div class="a t" style="left:356.55px;top:1578.08px;font-size:12.5px;font-weight:400;color:#fff;">10</div>
<div class="a" style="left:459.5px;top:1471px;width:30.0px;height:22px;background:#f53d5a;"></div>
<div class="a t" style="left:467.55px;top:1476.08px;font-size:12.5px;font-weight:400;color:#fff;">31</div>
<div class="a" style="left:569.5px;top:1471px;width:30.0px;height:22px;background:#ee9b4d;"></div>
<div class="a t" style="left:577.55px;top:1476.08px;font-size:12.5px;font-weight:400;color:#fff;">31</div>
<div class="a" style="left:684.0px;top:1622px;width:23.0px;height:22px;background:#cdd8e8;"></div>
<div class="a t" style="left:692.02px;top:1627.08px;font-size:12.5px;font-weight:400;color:#f6f8fc;">0</div>
<div class="a t" style="left:344.40px;top:1664.58px;font-size:12.5px;font-weight:400;color:#757575;">Critical</div>
<div class="a t" style="left:461.64px;top:1664.58px;font-size:12.5px;font-weight:400;color:#757575;">High</div>
<div class="a t" style="left:562.27px;top:1664.58px;font-size:12.5px;font-weight:400;color:#757575;">Medium</div>
<div class="a t" style="left:683.53px;top:1664.58px;font-size:12.5px;font-weight:400;color:#757575;">Low</div>
<div class="a t" style="left:261.00px;top:1722.75px;font-size:25px;font-weight:400;color:#1f2a3c;letter-spacing:0.684px;">Inventory</div>
<div class="a" style="left:261px;top:1777px;width:382.25px;height:313px;background:#fff;border-radius:2px;box-shadow:0 1px 28px rgba(0,0,0,0.085);clip-path:inset(-40px -40px -40px 0);"></div>
<div class="a" style="left:285px;top:1785px;width:109.5px;height:22px;background:#3d8bfd;border-radius:3px;"></div>
<div class="a t" style="left:293.38px;top:1788.65px;font-size:15px;font-weight:400;color:#fff;letter-spacing:-0.242px;">Dependencies</div>
<div class="a t" style="left:403.00px;top:1789.94px;font-size:14.4px;font-weight:700;color:#1f2a3c;letter-spacing:-0.345px;">Licenses by Severity</div>
<div class="a" style="left:261px;top:1816px;width:382.25px;height:1px;background:#d5d5d5;"></div>
<div class="a" style="left:659.25px;top:1777px;width:382.25px;height:313px;background:#fff;border-radius:2px;box-shadow:0 1px 28px rgba(0,0,0,0.085);"></div>
<div class="a" style="left:683.25px;top:1785px;width:109.5px;height:22px;background:#3d8bfd;border-radius:3px;"></div>
<div class="a t" style="left:691.63px;top:1788.65px;font-size:15px;font-weight:400;color:#fff;letter-spacing:-0.242px;">Dependencies</div>
<div class="a t" style="left:801.25px;top:1789.94px;font-size:14.4px;font-weight:700;color:#1f2a3c;letter-spacing:-0.461px;">Top Risky Licenses</div>
<div class="a" style="left:659.25px;top:1816px;width:382.25px;height:1px;background:#d5d5d5;"></div>
<div class="a" style="left:1057.5px;top:1777px;width:514.5px;height:313px;background:#fff;border-radius:2px;box-shadow:0 1px 28px rgba(0,0,0,0.085);"></div>
<div class="a" style="left:1081.5px;top:1785px;width:109.5px;height:22px;background:#3d8bfd;border-radius:3px;"></div>
<div class="a t" style="left:1089.88px;top:1788.65px;font-size:15px;font-weight:400;color:#fff;letter-spacing:-0.242px;">Dependencies</div>
<div class="a t" style="left:1199.50px;top:1789.94px;font-size:14.4px;font-weight:700;color:#1f2a3c;letter-spacing:0.302px;">Inventory</div>
<div class="a" style="left:1057.5px;top:1816px;width:514.5px;height:1px;background:#d5d5d5;"></div>
<div class="a" style="left:317px;top:1847.5px;width:301.5px;height:1.0px;background:#d9d9d9;"></div>
<div class="a" style="left:310px;top:1847.5px;width:7px;height:1.0px;background:#666;"></div>
<div class="a t" style="left:286.14px;top:1842.38px;font-size:12.5px;font-weight:400;color:#757575;">150</div>
<div class="a" style="left:317px;top:1896.5px;width:301.5px;height:1.0px;background:#d9d9d9;"></div>
<div class="a" style="left:310px;top:1896.5px;width:7px;height:1.0px;background:#666;"></div>
<div class="a t" style="left:293.09px;top:1891.38px;font-size:12.5px;font-weight:400;color:#757575;">30</div>
<div class="a" style="left:317px;top:1941.5px;width:301.5px;height:1.0px;background:#d9d9d9;"></div>
<div class="a" style="left:310px;top:1941.5px;width:7px;height:1.0px;background:#666;"></div>
<div class="a t" style="left:293.09px;top:1936.38px;font-size:12.5px;font-weight:400;color:#757575;">20</div>
<div class="a" style="left:317px;top:1985.5px;width:301.5px;height:1.0px;background:#d9d9d9;"></div>
<div class="a" style="left:310px;top:1985.5px;width:7px;height:1.0px;background:#666;"></div>
<div class="a t" style="left:293.09px;top:1980.38px;font-size:12.5px;font-weight:400;color:#757575;">10</div>
<div class="a" style="left:310px;top:2028.5px;width:7px;height:1.0px;background:#666;"></div>
<div class="a t" style="left:300.05px;top:2023.38px;font-size:12.5px;font-weight:400;color:#757575;">0</div>
<div class="a" style="left:316.5px;top:1848px;width:1.0px;height:181px;background:#666;"></div>
<div class="a" style="left:316.5px;top:2028.5px;width:302.0px;height:1.0px;background:#666;"></div>
<div class="a" style="left:376.5px;top:2029px;width:1.0px;height:7px;background:#666;"></div>
<div class="a" style="left:438.0px;top:2029px;width:1.0px;height:7px;background:#666;"></div>
<div class="a" style="left:497.5px;top:2029px;width:1.0px;height:7px;background:#666;"></div>
<div class="a" style="left:559.0px;top:2029px;width:1.0px;height:7px;background:#666;"></div>
<svg class="a" style="left:0;top:1860px" width="619" height="30" viewBox="0 1860 619 30"><path d="M313.5 1874.5 Q319.57 1870.3 325.65 1874.5 Q331.72 1878.7 337.80 1874.5 Q343.87 1870.3 349.95 1874.5 Q356.02 1878.7 362.10 1874.5 Q368.17 1870.3 374.25 1874.5 Q380.32 1878.7 386.40 1874.5 Q392.47 1870.3 398.55 1874.5 Q404.62 1878.7 410.70 1874.5 Q416.77 1870.3 422.85 1874.5 Q428.92 1878.7 435.00 1874.5 Q441.07 1870.3 447.15 1874.5 Q453.22 1878.7 459.30 1874.5 Q465.37 1870.3 471.45 1874.5 Q477.52 1878.7 483.60 1874.5 Q489.67 1870.3 495.75 1874.5 Q501.82 1878.7 507.90 1874.5 Q513.97 1870.3 520.05 1874.5 Q526.12 1878.7 532.20 1874.5 Q538.27 1870.3 544.35 1874.5 Q550.42 1878.7 556.50 1874.5 Q562.57 1870.3 568.65 1874.5 Q574.72 1878.7 580.80 1874.5 Q586.87 1870.3 592.95 1874.5 Q599.02 1878.7 605.10 1874.5 Q611.17 1870.3 617.25 1874.5 Q623.32 1878.7 629.40 1874.5" fill="none" stroke="#fff" stroke-width="5"/><path d="M313.5 1872 Q319.57 1867.8 325.65 1872 Q331.72 1876.2 337.80 1872 Q343.87 1867.8 349.95 1872 Q356.02 1876.2 362.10 1872 Q368.17 1867.8 374.25 1872 Q380.32 1876.2 386.40 1872 Q392.47 1867.8 398.55 1872 Q404.62 1876.2 410.70 1872 Q416.77 1867.8 422.85 1872 Q428.92 1876.2 435.00 1872 Q441.07 1867.8 447.15 1872 Q453.22 1876.2 459.30 1872 Q465.37 1867.8 471.45 1872 Q477.52 1876.2 483.60 1872 Q489.67 1867.8 495.75 1872 Q501.82 1876.2 507.90 1872 Q513.97 1867.8 520.05 1872 Q526.12 1876.2 532.20 1872 Q538.27 1867.8 544.35 1872 Q550.42 1876.2 556.50 1872 Q562.57 1867.8 568.65 1872 Q574.72 1876.2 580.80 1872 Q586.87 1867.8 592.95 1872 Q599.02 1876.2 605.10 1872 Q611.17 1867.8 617.25 1872 Q623.32 1876.2 629.40 1872" fill="none" stroke="#cbcbcb" stroke-width="1.1"/><path d="M313.5 1877.1 Q319.57 1872.8999999999999 325.65 1877.1 Q331.72 1881.3 337.80 1877.1 Q343.87 1872.8999999999999 349.95 1877.1 Q356.02 1881.3 362.10 1877.1 Q368.17 1872.8999999999999 374.25 1877.1 Q380.32 1881.3 386.40 1877.1 Q392.47 1872.8999999999999 398.55 1877.1 Q404.62 1881.3 410.70 1877.1 Q416.77 1872.8999999999999 422.85 1877.1 Q428.92 1881.3 435.00 1877.1 Q441.07 1872.8999999999999 447.15 1877.1 Q453.22 1881.3 459.30 1877.1 Q465.37 1872.8999999999999 471.45 1877.1 Q477.52 1881.3 483.60 1877.1 Q489.67 1872.8999999999999 495.75 1877.1 Q501.82 1881.3 507.90 1877.1 Q513.97 1872.8999999999999 520.05 1877.1 Q526.12 1881.3 532.20 1877.1 Q538.27 1872.8999999999999 544.35 1877.1 Q550.42 1881.3 556.50 1877.1 Q562.57 1872.8999999999999 568.65 1877.1 Q574.72 1881.3 580.80 1877.1 Q586.87 1872.8999999999999 592.95 1877.1 Q599.02 1881.3 605.10 1877.1 Q611.17 1872.8999999999999 617.25 1877.1 Q623.32 1881.3 629.40 1877.1" fill="none" stroke="#cbcbcb" stroke-width="1.1"/></svg>
<div class="a" style="left:326px;top:2012px;width:42px;height:16.5px;background:#f53d5a;"></div>
<div class="a" style="left:387px;top:1892.5px;width:42px;height:136.0px;background:#ee9b4d;"></div>
<div class="a" style="left:447px;top:1848px;width:42px;height:180.5px;background:#2ab592;"></div>
<div class="a" style="left:335.5px;top:1980px;width:23.0px;height:22px;background:#f53d5a;"></div>
<div class="a t" style="left:343.52px;top:1985.08px;font-size:12.5px;font-weight:400;color:#fff;">4</div>
<div class="a" style="left:393.0px;top:1861px;width:30.0px;height:22px;background:#ee9b4d;"></div>
<div class="a t" style="left:401.05px;top:1866.08px;font-size:12.5px;font-weight:400;color:#fff;">31</div>
<div class="a" style="left:447px;top:1873.5px;width:3px;height:4.5px;background:#fff;border-radius:0 2px 2px 0;"></div>
<div class="a" style="left:487px;top:1872.5px;width:2px;height:4.0px;background:#fff;border-radius:2px 0 0 2px;"></div>
<div class="a t" style="left:457.57px;top:1862.88px;font-size:12.5px;font-weight:400;color:#fff;">150</div>
<div class="a" style="left:517.0px;top:1998px;width:23.0px;height:22px;background:#c6cacd;"></div>
<div class="a t" style="left:525.02px;top:2003.08px;font-size:12.5px;font-weight:400;color:#f5f6f7;">0</div>
<div class="a" style="left:578.0px;top:1998px;width:23.0px;height:22px;background:#cfc9a6;"></div>
<div class="a t" style="left:586.02px;top:2003.08px;font-size:12.5px;font-weight:400;color:#f7f5ec;">0</div>
<div class="a t" style="left:334.14px;top:2040.88px;font-size:12.5px;font-weight:400;color:#757575;">High</div>
<div class="a t" style="left:385.77px;top:2040.88px;font-size:12.5px;font-weight:400;color:#757575;">Medium</div>
<div class="a t" style="left:456.53px;top:2040.88px;font-size:12.5px;font-weight:400;color:#757575;">Low</div>
<div class="a t" style="left:502.44px;top:2040.88px;font-size:12.5px;font-weight:400;color:#757575;">Unknown</div>
<div class="a t" style="left:581.51px;top:2040.88px;font-size:12.5px;font-weight:400;color:#757575;">No</div>
<div class="a t" style="left:567.95px;top:2053.38px;font-size:12.5px;font-weight:400;color:#757575;">License</div>
<div class="a" style="left:683px;top:1841px;width:28px;height:20px;background:#f53d5a;"></div>
<div class="a t" style="left:693.38px;top:1844.33px;font-size:13px;font-weight:400;color:#fff;">4</div>
<div class="a t" style="left:719.00px;top:1844.24px;font-size:14.4px;font-weight:700;color:#777;letter-spacing:-0.475px;">GPL 2.0</div>
<div class="a" style="left:683px;top:1869px;width:28px;height:20px;background:#ee9b4d;"></div>
<div class="a t" style="left:690.25px;top:1872.33px;font-size:13px;font-weight:400;color:#fff;">11</div>
<div class="a t" style="left:719.00px;top:1872.24px;font-size:14.4px;font-weight:700;color:#777;letter-spacing:-0.310px;">Eclipse 2.0</div>
<div class="a" style="left:683px;top:1897px;width:28px;height:20px;background:#ee9b4d;"></div>
<div class="a t" style="left:693.38px;top:1900.33px;font-size:13px;font-weight:400;color:#fff;">9</div>
<div class="a t" style="left:719.00px;top:1900.24px;font-size:14.4px;font-weight:700;color:#777;letter-spacing:-0.578px;">LGPL 2.1</div>
<div class="a" style="left:683px;top:1925px;width:28px;height:20px;background:#ee9b4d;"></div>
<div class="a t" style="left:693.38px;top:1928.33px;font-size:13px;font-weight:400;color:#fff;">6</div>
<div class="a t" style="left:719.00px;top:1928.24px;font-size:14.4px;font-weight:700;color:#777;letter-spacing:-0.242px;">GPL 2.0 Classpath</div>
<div class="a" style="left:683px;top:1953px;width:28px;height:20px;background:#ee9b4d;"></div>
<div class="a t" style="left:693.38px;top:1956.33px;font-size:13px;font-weight:400;color:#fff;">5</div>
<div class="a t" style="left:719.00px;top:1956.24px;font-size:14.4px;font-weight:700;color:#777;letter-spacing:-0.310px;">Eclipse 1.0</div>
<div class="a" style="left:1082px;top:1841.3px;width:465.70000000000005px;height:208.50000000000023px;background:#f8f8f8;border-radius:14px;border:1px solid #cfcfcf;box-sizing:border-box;"></div>
<div class="a t" style="left:1284.29px;top:1897.94px;font-size:14.4px;font-weight:700;color:#777;letter-spacing:0.078px;">Libraries</div>
<div class="a t" style="left:1253.77px;top:1923.54px;font-size:74px;font-weight:400;color:#0b3b8c;">168</div>
</body></html>
